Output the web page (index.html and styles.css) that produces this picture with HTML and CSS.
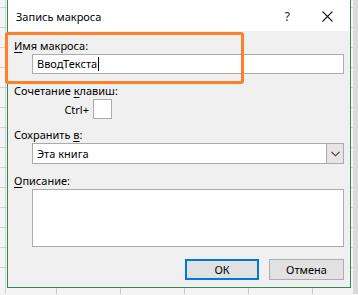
FILE: index.html
```html
<!DOCTYPE html>
<html lang="ru">

<head>
  <meta charset="UTF-8">
  <meta name="viewport" content="width=device-width, initial-scale=1.0">
  <title>Запись макроса</title>
  <link rel="stylesheet" href="styles.css">
</head>

<body>
  <div class="sheet">
    <div class="dialog">
      <div class="title-bar">
        <span class="title">Запись макроса</span>
        <span class="help">?</span>
        <svg class="close-icon" width="11" height="11" viewBox="0 0 11 11">
          <path d="M0.5 0.5 L10.5 10.5 M10.5 0.5 L0.5 10.5" stroke="#1a1a1a" stroke-width="1.1" fill="none" />
        </svg>
      </div>

      <div class="dialog-body">
        <div class="field-label"><u>И</u>мя макроса:</div>
        <div class="text-input">ВводТекста<span class="caret"></span></div>

        <div class="field-label">Сочетание <u>к</u>лавиш:</div>
        <div class="shortcut-row">
          <span class="shortcut-prefix">Ctrl+</span>
          <span class="key-box"></span>
        </div>

        <div class="field-label">Сохранить <u>в</u>:</div>
        <div class="select">
          <span class="select-value">Эта книга</span>
          <span class="select-arrow">
            <svg width="9" height="6" viewBox="0 0 9 6">
              <path d="M0.5 0.8 L4.5 4.8 L8.5 0.8" stroke="#5a2a1a" stroke-width="1.1" fill="none" />
            </svg>
          </span>
        </div>

        <div class="field-label"><u>О</u>писание:</div>
        <div class="textarea"></div>

        <div class="buttons">
          <button class="btn btn-primary">ОК</button>
          <button class="btn">Отмена</button>
        </div>
      </div>

      <div class="highlight"></div>
    </div>
  </div>
</body>

</html>
```

FILE: styles.css
```css
* {
  margin: 0;
  padding: 0;
  box-sizing: border-box;
}

body {
  font-family: 'Noto Sans', 'Open Sans', sans-serif;
  font-size: 11px;
  color: #000;
  background-color: #f4f4f4;
  overflow: hidden;
}

.sheet {
  width: 358px;
  height: 295px;
  background-image:
    linear-gradient(to right, transparent 353px, #dadada 353px),
    linear-gradient(to right, transparent 5px, #d2d2d2 5px, #d2d2d2 6px, transparent 6px),
    repeating-linear-gradient(to bottom, transparent 0, transparent 19px, #d0d0d0 19px, #d0d0d0 20px),
    repeating-linear-gradient(to right, transparent 0, transparent 63px, #c8c8c8 63px, #c8c8c8 64px);
  background-position: 0 0, 0 0, 0 -11px, -7px 0;
}

.dialog {
  position: relative;
  width: 344px;
  height: 289px;
  margin-top: -1px;
  margin-left: 7px;
  border: 1px solid #2f8a55;
  background-color: #f0f0f0;
  display: flex;
  flex-direction: column;
}

.title-bar {
  height: 31px;
  background-color: #fff;
  display: flex;
  align-items: center;
  padding-left: 8px;
  padding-top: 1px;
  flex-shrink: 0;
}

.title {
  flex: 1;
  font-size: 11px;
}

.help {
  font-size: 12px;
  margin-right: 32px;
  color: #1a1a1a;
}

.close-icon {
  margin-right: 17px;
}

.dialog-body {
  display: flex;
  flex-direction: column;
  padding: 7px 6px 0 6px;
}

.field-label {
  line-height: 16px;
  height: 16px;
}

.field-label u {
  text-underline-offset: 2px;
}

.text-input {
  margin: 0 0 9px 18px;
  height: 20px;
  border: 1px solid #ababab;
  background-color: #fff;
  padding-left: 4px;
  line-height: 18px;
  display: flex;
  align-items: center;
}

.caret {
  width: 1px;
  height: 14px;
  background-color: #000;
  margin-left: 1px;
}

.shortcut-row {
  display: flex;
  align-items: center;
  gap: 4px;
  margin-bottom: 8px;
}

.shortcut-prefix {
  width: 75px;
  text-align: right;
}

.key-box {
  width: 19px;
  height: 20px;
  border: 1px solid #ababab;
  background-color: #fff;
}

.select {
  margin: 0 0 9px 18px;
  height: 21px;
  border: 1px solid #ababab;
  background-color: #fff;
  display: flex;
  align-items: center;
}

.select-value {
  flex: 1;
  padding-left: 4px;
}

.select-arrow {
  width: 17px;
  height: 19px;
  background-color: #e5e5e5;
  border-left: 1px solid #ababab;
  display: flex;
  align-items: center;
  justify-content: center;
}

.textarea {
  margin: 0 0 12px 18px;
  height: 58px;
  border: 1px solid #ababab;
  background-color: #fff;
}

.buttons {
  display: flex;
  justify-content: flex-end;
  gap: 10px;
}

.btn {
  font-family: inherit;
  font-size: 11px;
  height: 21px;
  width: 75px;
  background-color: #e1e1e1;
  border: 1px solid #adadad;
  color: #000;
}

.btn-primary {
  width: 74px;
  border: 2px solid #0078d7;
}

.highlight {
  position: absolute;
  left: -3px;
  top: 32px;
  width: 239px;
  height: 52px;
  border: 3px solid #fe7f2a;
  border-radius: 3px;
}
```
